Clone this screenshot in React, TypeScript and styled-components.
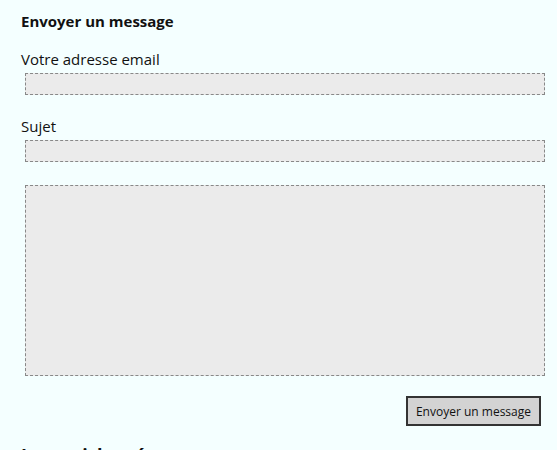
import React from "react";
import styled, { createGlobalStyle } from "styled-components";

const Global = createGlobalStyle`
  html, body { margin: 0; padding: 0; background: #f4ffff; }
  body { font-family: "Open Sans", "DejaVu Sans", sans-serif; color: #111; }
`;

const Page = styled.div`
  padding: 11px 12px 0 21px;
  height: 450px;
  overflow: hidden;
  box-sizing: border-box;
`;

const Title = styled.h3`
  margin: 0;
  font-size: 15px;
  font-weight: 700;
  line-height: 20px;
`;

const Form = styled.form`
  display: flex;
  flex-direction: column;
`;

const Label = styled.label`
  display: block;
  font-size: 15px;
  line-height: 20px;
  margin-top: ${(p: { $top: number }) => p.$top}px;
`;

const Input = styled.input`
  display: block;
  box-sizing: border-box;
  margin: 4px 0 0 4px;
  width: 520px;
  height: 22px;
  background: #ebebeb;
  border: 1px dashed #888;
  outline: none;
`;

const Area = styled.textarea`
  display: block;
  box-sizing: border-box;
  margin: 23px 0 0 4px;
  width: 520px;
  height: 191px;
  background: #ebebeb;
  border: 1px dashed #888;
  resize: none;
  outline: none;
`;

const Actions = styled.div`
  display: flex;
  justify-content: flex-end;
  width: 520px;
  margin-top: 20px;
`;

const Button = styled.button`
  height: 30px;
  padding: 0 8px;
  font-family: "Open Sans", "DejaVu Sans", sans-serif;
  font-size: 12px;
  color: #111;
  background: #d3d3d3;
  border: 2px solid #333;
`;

const Next = styled.h3`
  margin: 17px 0 0;
  font-size: 18px;
  font-weight: 700;
  line-height: 24px;
`;

export default function App() {
  return (
    <>
      <Global />
      <Page>
        <Title>Envoyer un message</Title>
        <Form onSubmit={(e) => e.preventDefault()}>
          <Label $top={18}>Votre adresse email</Label>
          <Input type="text" />
          <Label $top={21}>Sujet</Label>
          <Input type="text" />
          <Area />
          <Actions>
            <Button type="submit">Envoyer un message</Button>
          </Actions>
        </Form>
        <Next>Les articles récents</Next>
      </Page>
    </>
  );
}
